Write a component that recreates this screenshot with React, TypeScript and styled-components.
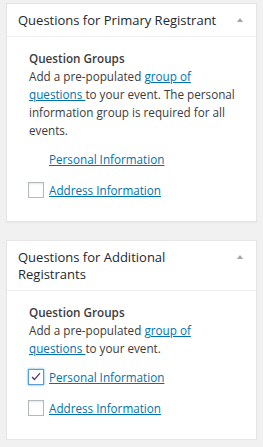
import React from "react";
import styled, { createGlobalStyle } from "styled-components";

const Global = createGlobalStyle`
  html, body { margin: 0; padding: 0; background: #f1f1f1; }
  body { font-family: "Open Sans", "Noto Sans", sans-serif; -webkit-font-smoothing: antialiased; }
`;

const Page = styled.div`
  display: flex;
  flex-direction: column;
  gap: 18px;
  padding: 3px 6px 0 6px;
  width: 251px;
`;

const Panel = styled.section`
  background: #fff;
  border: 1px solid #e5e5e5;
  box-shadow: 0 1px 1px rgba(0, 0, 0, 0.04);
`;

const Header = styled.div`
  display: flex;
  align-items: flex-start;
  justify-content: space-between;
  padding: 8px 12px 7px 11px;
  border-bottom: 1px solid #eee;
`;

const Title = styled.h2`
  margin: 0;
  font-size: 13px;
  font-weight: 400;
  line-height: 17px;
  color: #23282d;
`;

const Toggle = styled.span`
  flex: none;
  width: 0;
  height: 0;
  margin: 6px 1px 0 8px;
  border-left: 3px solid transparent;
  border-right: 3px solid transparent;
  border-bottom: 4px solid #a0a5aa;
`;

const Body = styled.div`
  padding: 12px 12px 21px 22px;
  font-size: 11.7px;
  line-height: 18px;
  color: #3c3c3c;
`;

const Heading = styled.div`
  font-weight: 600;
`;

const Text = styled.p`
  margin: 0;
`;

const Link = styled.a`
  color: #0073aa;
  text-decoration: underline;
`;

const List = styled.ul`
  list-style: none;
  margin: 10px 0 0 0;
  padding: 0;
  display: flex;
  flex-direction: column;
  gap: 11px;
`;

const Row = styled.li`
  display: flex;
  align-items: center;
  height: 20px;
  gap: 5px;
  margin-left: -1px;
`;

const Box = styled.span<{ $checked?: boolean; $hidden?: boolean }>`
  flex: none;
  box-sizing: border-box;
  width: 16px;
  height: 16px;
  display: flex;
  align-items: center;
  justify-content: center;
  background: #fff;
  border: 1px solid ${(p) => (p.$checked ? "#5b9dd9" : "#b4b9be")};
  box-shadow: ${(p) =>
    p.$checked
      ? "0 0 2px rgba(30,140,190,0.8)"
      : "inset 0 1px 2px rgba(0,0,0,0.1)"};
  visibility: ${(p) => (p.$hidden ? "hidden" : "visible")};
`;

const Check = () => (
  <svg width="12" height="12" viewBox="0 0 12 12">
    <path d="M1.5 6.5 L4.5 9.5 L10.5 2.5 L9.5 1.8 L4.5 7.6 L2.6 5.6 Z" fill="#553c7f" />
  </svg>
);

type Item = { label: string; checked?: boolean; hidden?: boolean };

const MetaBox = ({ title, items }: { title: string; items: Item[] }) => (
  <Panel>
    <Header>
      <Title>{title}</Title>
      <Toggle />
    </Header>
    <Body>
      <Heading>Question Groups</Heading>
      <Text>
        Add a pre-populated <Link href="#">group of questions </Link>to your event.
        {items.length && items[0].hidden
          ? " The personal information group is required for all events."
          : ""}
      </Text>
      <List>
        {items.map((it) => (
          <Row key={it.label}>
            <Box $checked={it.checked} $hidden={it.hidden}>
              {it.checked ? <Check /> : null}
            </Box>
            <Link href="#">{it.label}</Link>
          </Row>
        ))}
      </List>
    </Body>
  </Panel>
);

export default function App() {
  return (
    <>
      <Global />
      <Page>
        <MetaBox
          title="Questions for Primary Registrant"
          items={[
            { label: "Personal Information", hidden: true },
            { label: "Address Information" },
          ]}
        />
        <MetaBox
          title="Questions for Additional Registrants"
          items={[
            { label: "Personal Information", checked: true },
            { label: "Address Information" },
          ]}
        />
      </Page>
    </>
  );
}
